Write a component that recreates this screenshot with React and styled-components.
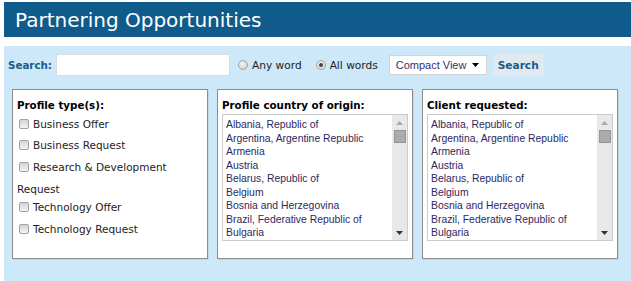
import React from "react";
import styled, { createGlobalStyle } from "styled-components";

const GlobalStyle = createGlobalStyle`
  html, body {
    margin: 0;
    background: #fff;
    overflow: hidden;
  }
  body {
    font-family: "DejaVu Sans", Verdana, sans-serif;
  }
`;

const Page = styled.div`
  padding: 2px 0 0 4px;
`;

const Header = styled.div`
  height: 35px;
  background: #0f5b8b;
  color: #fff;
  display: flex;
  align-items: center;
  padding-left: 11px;
  font-size: 20px;
`;

const Panel = styled.div`
  margin-top: 9px;
  background: #cde8f8;
  padding: 8px 0 22px 4px;
`;

const SearchRow = styled.div`
  display: flex;
  align-items: center;
  height: 22px;
`;

const SearchLabel = styled.label`
  font-weight: bold;
  font-size: 10.3px;
  color: #1b5a8b;
  margin-right: 4px;
`;

const TextInput = styled.input`
  box-sizing: border-box;
  width: 174px;
  height: 22px;
  margin: 0 8px 0 0;
  border: 1px solid #dcdcdc;
  background: #fff;
  padding: 0 3px;
`;

const Radio = styled.span`
  box-sizing: border-box;
  width: 10px;
  height: 10px;
  border-radius: 50%;
  border: 1px solid #a3a3a3;
  background: radial-gradient(circle at 40% 35%, #f4f4f4, #c9c9c9);
  display: inline-flex;
  align-items: center;
  justify-content: center;
  margin-right: 4px;
  &::after {
    content: "";
    width: 4px;
    height: 4px;
    border-radius: 50%;
    background: ${(p) => (p.$checked ? "#444" : "transparent")};
  }
`;

const RadioText = styled.span`
  font-size: 10.6px;
  color: #222;
  margin-right: ${(p) => p.$gap}px;
`;

const SelectBox = styled.div`
  box-sizing: border-box;
  width: 98px;
  height: 20px;
  background: #fff;
  border: 1px solid #d4d4d4;
  display: flex;
  align-items: center;
  justify-content: space-between;
  padding: 0 7px 0 6px;
  font-family: "Liberation Sans", Arial, sans-serif;
  font-size: 11px;
  color: #343366;
  margin-right: 6px;
`;

const SearchButton = styled.button`
  box-sizing: border-box;
  width: 51px;
  height: 22px;
  border: none;
  background: #dfe9ef;
  font-family: "DejaVu Sans", Verdana, sans-serif;
  font-weight: bold;
  font-size: 10.6px;
  color: #1b5a8b;
  padding: 0;
`;

const BoxRow = styled.div`
  display: flex;
  gap: 9px;
  margin: 13px 0 0 4px;
`;

const Box = styled.div`
  box-sizing: border-box;
  width: 196px;
  height: 170px;
  background: #fff;
  border: 1px solid #8d8d8d;
  box-shadow: 1px 1px 0 #c4d6e0;
  padding: 8px 4px 0;
`;

const BoxTitle = styled.div`
  font-weight: bold;
  font-size: 10.3px;
  line-height: 14px;
  color: #000;
  margin-bottom: ${(p) => p.$gap}px;
`;

const CheckItem = styled.div`
  font-size: 10.5px;
  line-height: 21.7px;
  color: #222;
  margin-bottom: ${(p) => (p.$wrapped ? -3.4 : 0)}px;
`;

const Check = styled.span`
  box-sizing: border-box;
  display: inline-block;
  width: 10px;
  height: 10px;
  border: 1px solid #a2a2a2;
  border-radius: 2px;
  background: linear-gradient(#d6d6d6, #f3f3f3);
  margin: 0 4px 0 2px;
  vertical-align: -1px;
`;

const ListBox = styled.div`
  box-sizing: border-box;
  height: 127px;
  border: 1px solid #cbcbcb;
  display: flex;
`;

const Options = styled.div`
  flex: 1;
  overflow: hidden;
  padding: 3px 0 0 3px;
  font-family: "Liberation Sans", Arial, sans-serif;
  font-size: 10.4px;
  line-height: 13.55px;
  color: #2e285e;
  white-space: nowrap;
`;

const ScrollBar = styled.div`
  width: 15px;
  display: flex;
  flex-direction: column;
  background: #e8e8e8;
`;

const ScrollButton = styled.div`
  height: 15px;
  display: flex;
  align-items: center;
  justify-content: center;
`;

const Thumb = styled.div`
  box-sizing: border-box;
  height: 13px;
  margin: 0 1px 0 2px;
  background: #ababab;
  border: 1px solid #959595;
`;

const Track = styled.div`
  flex: 1;
`;

const countries = [
  "Albania, Republic of",
  "Argentina, Argentine Republic",
  "Armenia",
  "Austria",
  "Belarus, Republic of",
  "Belgium",
  "Bosnia and Herzegovina",
  "Brazil, Federative Republic of",
  "Bulgaria",
];

const Arrow = ({ up, color }) => (
  <svg width="7" height="4" viewBox="0 0 7 4">
    <polygon points={up ? "0,4 7,4 3.5,0" : "0,0 7,0 3.5,4"} fill={color} />
  </svg>
);

const CountryList = () => (
  <ListBox>
    <Options>
      {countries.map((c) => (
        <div key={c}>{c}</div>
      ))}
    </Options>
    <ScrollBar>
      <ScrollButton>
        <Arrow up color="#a9a9a9" />
      </ScrollButton>
      <Thumb />
      <Track />
      <ScrollButton>
        <Arrow color="#333" />
      </ScrollButton>
    </ScrollBar>
  </ListBox>
);

const App = () => (
  <Page>
    <GlobalStyle />
    <Header>Partnering Opportunities</Header>
    <Panel>
      <SearchRow>
        <SearchLabel>Search:</SearchLabel>
        <TextInput type="text" />
        <Radio />
        <RadioText $gap={14}>Any word</RadioText>
        <Radio $checked />
        <RadioText $gap={11}>All words</RadioText>
        <SelectBox>
          <span>Compact View</span>
          <Arrow color="#000" />
        </SelectBox>
        <SearchButton>Search</SearchButton>
      </SearchRow>
      <BoxRow>
        <Box>
          <BoxTitle $gap={1.5}>Profile type(s):</BoxTitle>
          <CheckItem><Check />Business Offer</CheckItem>
          <CheckItem><Check />Business Request</CheckItem>
          <CheckItem $wrapped><Check />Research &amp; Development Request</CheckItem>
          <CheckItem><Check />Technology Offer</CheckItem>
          <CheckItem><Check />Technology Request</CheckItem>
        </Box>
        <Box>
          <BoxTitle $gap={2}>Profile country of origin:</BoxTitle>
          <CountryList />
        </Box>
        <Box>
          <BoxTitle $gap={2}>Client requested:</BoxTitle>
          <CountryList />
        </Box>
      </BoxRow>
    </Panel>
  </Page>
);

export default App;
